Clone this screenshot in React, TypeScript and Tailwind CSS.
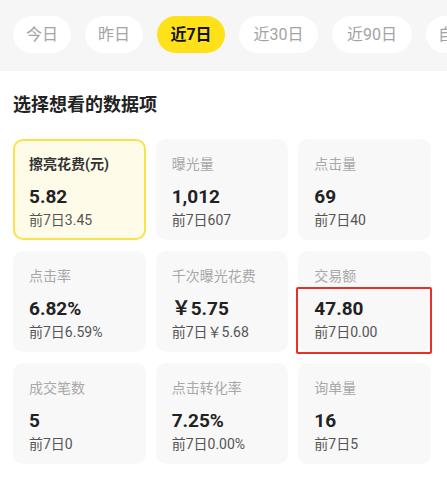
import React from 'react'

const tabs = [
  { text: '今日', w: 'w-[58px]' },
  { text: '昨日', w: 'w-[58px]' },
  { text: '近7日', w: 'w-[68px]' },
  { text: '近30日', w: 'w-[79px]' },
  { text: '近90日', w: 'w-[80px]' },
  { text: '自定义', w: 'w-[72px]' },
]

type Metric = {
  label: string
  value: string
  prev: string
  active?: boolean
  marked?: boolean
}

const metrics: Metric[] = [
  { label: '擦亮花费(元)', value: '5.82', prev: '前7日3.45', active: true },
  { label: '曝光量', value: '1,012', prev: '前7日607' },
  { label: '点击量', value: '69', prev: '前7日40' },
  { label: '点击率', value: '6.82%', prev: '前7日6.59%' },
  { label: '千次曝光花费', value: '￥5.75', prev: '前7日￥5.68' },
  { label: '交易额', value: '47.80', prev: '前7日0.00', marked: true },
  { label: '成交笔数', value: '5', prev: '前7日0' },
  { label: '点击转化率', value: '7.25%', prev: '前7日0.00%' },
  { label: '询单量', value: '16', prev: '前7日5' },
]

function MetricCard({ m }: { m: Metric }) {
  return (
    <div
      className={
        m.active
          ? 'relative h-[101px] rounded-[10px] border-2 border-[#fbe24a] bg-[#fffbe9] pl-[14px] pt-[13px]'
          : 'relative h-[101px] rounded-[10px] bg-[#f8f8f8] pl-4 pt-[15px]'
      }
    >
      <div
        className={
          m.active
            ? 'text-[14px] leading-5 font-bold text-[#333]'
            : 'text-[14px] leading-5 text-[#a8a8a8]'
        }
      >
        {m.label}
      </div>
      <div className="mt-[10px] text-[19px] leading-[26px] font-bold text-[#222]">{m.value}</div>
      <div className="text-[14px] leading-5 text-[#555]">{m.prev}</div>
      {m.marked && (
        <div className="absolute -left-[2px] -right-[1px] top-[36px] -bottom-[2px] rounded-[2px] border-2 border-[#e8302a]" />
      )}
    </div>
  )
}

export default function App() {
  return (
    <div className="w-[447px] h-[484px] overflow-hidden bg-white font-['Roboto','Noto_Sans_CJK_SC',sans-serif]">
      <div className="h-[71px] bg-[#f6f6f6] pl-[13px] pt-4 flex gap-[14px] overflow-hidden">
        {tabs.map((t) =>
          t.text === '近7日' ? (
            <div
              key={t.text}
              className={`${t.w} h-[37px] shrink-0 rounded-full bg-[#ffe11a] flex items-center justify-center text-[16px] font-bold text-[#111]`}
            >
              {t.text}
            </div>
          ) : (
            <div
              key={t.text}
              className={`${t.w} h-[37px] shrink-0 rounded-full bg-white flex items-center justify-center text-[16px] text-[#a3a3a3]`}
            >
              {t.text}
            </div>
          )
        )}
      </div>

      <div className="pl-[13px] pr-4">
        <h2 className="pt-[22px] text-[18px] leading-6 font-bold text-[#222]">选择想看的数据项</h2>
        <div className="mt-[22px] grid grid-cols-3 gap-x-[10px] gap-y-[11px]">
          {metrics.map((m) => (
            <MetricCard key={m.label} m={m} />
          ))}
        </div>
      </div>
    </div>
  )
}
